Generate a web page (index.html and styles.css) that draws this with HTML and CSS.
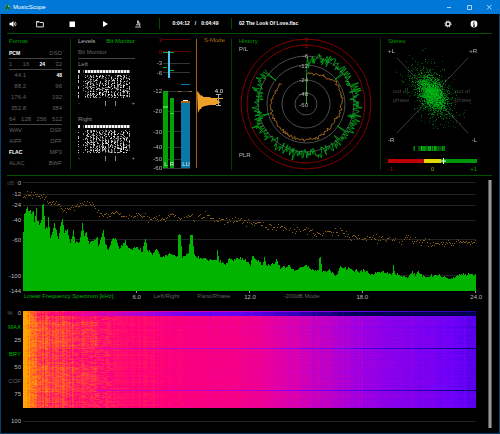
FILE: index.html
```
<!DOCTYPE html>
<html lang="en">
<head>
  <meta charset="UTF-8">
  <meta name="viewport" content="width=device-width, initial-scale=1.0">
  <title>MusicScope</title>
  <link rel="stylesheet" href="styles.css">
</head>
<body>

<header class="titlebar">
  <svg class="logo" viewBox="0 0 8 8"><circle cx="4" cy="4" r="3.6" fill="#1f8f86"/><path d="M2.5 6.5l1-3 .8-2 .6 2.2 1 2.8M1.5 4.5h2" fill="none" stroke="#0b2d3c" stroke-width=".9"/><circle cx="5.4" cy="2.6" r=".8" fill="#a5d06a"/></svg>
  <h1>MusicScope</h1>
  <button class="win" aria-label="Minimize"><svg viewBox="0 0 6 6"><path d="M1 3.5h4"/></svg></button>
  <button class="win" aria-label="Maximize"><svg viewBox="0 0 6 6"><path d="M1.500 1.500h4v4h-4z"/></svg></button>
  <button class="win" aria-label="Close"><svg viewBox="0 0 6 6"><path d="M1 1l4.500 4.500M5.500 1l-4.500 4.500"/></svg></button>
</header>

<div class="window">
  <nav class="toolbar">
    <button class="tool volume" aria-label="Volume"><svg viewBox="0 0 8 8"><path d="M.5 2.800h1.700l2.300-1.900v6.200l-2.300-1.900h-1.700z" fill="#fff"/><path d="M5.300 2.600q.9 1.400 0 2.800M6.300 1.800q1.700 2.200 0 4.400" fill="none" stroke="#ddd" stroke-width=".8"/></svg></button>
    <button class="tool folder" aria-label="Open"><svg viewBox="0 0 8 8"><path d="M.6 6.900v-5.400h2.400l.8 1h3.600v4.400z" fill="none" stroke="#ddd"/><path d="M.6 1.300h2.600v1.200h-2.600z" fill="#ddd"/></svg></button>
    <button class="tool" aria-label="Stop"><svg viewBox="0 0 8 8"><path d="M1.500 1.500h5.500v5.500h-5.500z" fill="#fff"/></svg></button>
    <button class="tool" aria-label="Play"><svg viewBox="0 0 8 8"><path d="M2 1l5 3-5 3z" fill="#fff"/></svg></button>
    <button class="tool" aria-label="Analyze"><svg viewBox="0 0 8 8"><path d="M3.200.6h1.600v3.200h-1.600z" fill="#ddd"/><path d="M5 2.200q1.800 1.500.5 3.800M2 4.800h3.500M1.200 7h5.800" fill="none" stroke="#ddd" stroke-width=".9"/></svg></button>
    <div class="time"><span>0:04:12</span><span>/</span><span>0:04:49</span></div>
    <div class="track">02 The Look Of Love.flac</div>
    <button class="tool side" aria-label="Settings"><svg viewBox="0 0 8 8"><circle cx="4" cy="4" r="2.900" fill="none" stroke="#ddd" stroke-width="1.200" stroke-dasharray="1.300 .98"/><circle cx="4" cy="4" r="1.900" fill="none" stroke="#ddd" stroke-width="1.200"/></svg></button>
    <button class="tool side" aria-label="Info"><svg viewBox="0 0 8 8"><circle cx="4" cy="4" r="3.400" fill="#fff"/><path d="M4 1.500v1.200M4 3.400v3M3.200 3.700h.8M3 6.200h2" stroke="#000" stroke-width=".9"/></svg></button>
  </nav>

  <main>
    <div class="panels">
      <section class="panel format">
        <h2>Format</h2>
        <div class="row line"><b>PCM</b><span>DSD</span></div>
        <div class="row line"><span>1</span><span>16</span><b>24</b><span>32</span></div>
        <div class="row rate"><span>44.1</span><b>48</b></div>
        <div class="row rate"><span>88.2</span><span>96</span></div>
        <div class="row rate"><span>176.4</span><span>192</span></div>
        <div class="row rate"><span>352.8</span><span>384</span></div>
        <div class="row line"><span>64</span><span>128</span><span>256</span><span>512</span></div>
        <div class="row"><span>WAV</span><span>DSF</span></div>
        <div class="row"><span>AIFF</span><span>DFF</span></div>
        <div class="row"><b>FLAC</b><span>MP3</span></div>
        <div class="row"><span>ALAC</span><span>BWF</span></div>
      </section>

      <section class="panel levels divided">
        <div class="tabs"><button>Levels</button><button class="active">Bit Monitor</button></div>
        <h3>Bit Monitor</h3>
        <div class="channel">
          <p>Left</p>
          <canvas class="bits" width="57" height="28"></canvas>
          <div class="scale"><span>-</span><i></i><i></i><span>+</span></div>
        </div>
        <div class="channel">
          <p>Right</p>
          <canvas class="bits" width="57" height="28"></canvas>
          <div class="scale"><span>-</span><i></i><i></i><span>+</span></div>
        </div>
      </section>

      <section class="panel">
        <svg class="chart" viewBox="148 38 83 132">
          <g class="crisp">
            <path d="M163 39.500h27M163 51.500h27" stroke="#5c0000"/>
            <path d="M163 63.500h27M163 72.500h27M163 91.500h27M163 111.500h27M163 131.500h27M163 147.500h27M163 159.500h27M163 168.500h27" stroke="#333"/>
            <path d="M163 91h5v77h-5zM170 98h4v70h-4z" fill="#00a400"/>
            <path d="M163 106h5v2h-5zM170 113h4v1h-4z" fill="#30e030"/>
            <path d="M163 52h11v1h-11zM163 67h4v1h-4zM170 70h4v1h-4z" fill="#00b030"/>
            <path d="M168 51h2v27h-2z" fill="#4cc8f0"/>
            <path d="M181 84h9v1h-9zM181 102h9v66h-9z" fill="#0878a8"/>
            <path d="M181 101h9v2h-9zM178 91h3v1h-3zM189 91h3v1h-3z" fill="#a86818"/>
            <path d="M183 100h5v1h-5z" fill="#fff"/>
            <path d="M196 39h1v129h-1z" fill="#a06410"/>
          </g>
          <path d="M197 91l2 2 1 2 3 1 0 1 7 0 1 1 12 0 0 1-6 0 0 1 3 1-1 1 2 1-2 0-1 1-2 0 0 1-6 0-5 1-3 1-1 2-1 0-2 4z" fill="#f0a028"/>
          <path d="M218.500 94.500v11M216 94.500h5M216 105.500h5" stroke="#aaa" fill="none"/>
          <g class="end red"><text x="162" y="42">3</text><text x="162" y="54">0</text></g>
          <g class="end"><text x="162" y="65">-3</text><text x="162" y="75">-6</text><text x="162" y="93">-12</text><text x="162" y="113">-20</text><text x="162" y="134">-30</text><text x="162" y="149">-40</text><text x="162" y="161">-50</text><text x="162" y="170">-60</text></g>
          <g class="mid white"><text x="166" y="166">L</text><text x="172" y="166">R</text><text x="186" y="166">LU</text><text x="219" y="93">4.0</text></g>
          <text x="204" y="42" class="amber">S-Mode</text>
        </svg>
      </section>

      <section class="panel divided">
        <svg class="chart" viewBox="232 38 148 132">
          <g fill="none" stroke="#4c4c4c">
            <circle cx="306" cy="104" r="48"/><circle cx="306" cy="104" r="39"/><circle cx="306" cy="104" r="24"/><circle cx="306" cy="104" r="11"/>
          </g>
          <g fill="none" stroke="#840000"><circle cx="306" cy="104" r="65"/><circle cx="306" cy="104" r="59"/></g>
          <polyline id="plr" class="trace amber-line"/>
          <polyline id="pl" class="trace green-line"/>
          <g class="end red"><text x="308" y="42">3</text><text x="308" y="48">0</text></g>
          <g class="end"><text x="308" y="58">-6</text><text x="308" y="68">-12</text><text x="308" y="82">-24</text><text x="308" y="96">-48</text><text x="308" y="107">-60</text></g>
          <text x="239" y="43" class="green">History</text>
          <text x="239" y="51">P/L</text>
          <text x="239" y="157">PLR</text>
        </svg>
      </section>

      <section class="panel divided">
        <svg class="chart" viewBox="381 38 111 132">
          <path d="M397 58l71 75M468 58l-71 75" stroke="#3c3c3c" fill="none"/>
          <g class="dim"><text x="393" y="93">out of</text><text x="393" y="102">phase</text><text x="455" y="93">out of</text><text x="455" y="102">phase</text></g>
          <g id="goniometer"></g>
          <g id="stripes" class="crisp"></g>
          <g class="crisp">
            <path d="M388 159h36v4h-36z" fill="#c00000"/><path d="M424 159h17v4h-17z" fill="#e0d800"/><path d="M441 159h36v4h-36z" fill="#00980a"/><path d="M441 160h5v2h-5z" fill="#70d070"/><path d="M443 158h1v6h-1z" fill="#fff"/>
          </g>
          <text x="388" y="43" class="green">Stereo</text>
          <text x="388" y="53">+L</text><text x="388" y="142">-R</text>
          <g class="end"><text x="477" y="53">+R</text><text x="477" y="142">-L</text></g>
          <text x="388" y="171" class="red">-1</text><text x="431" y="171" class="yellow">0</text><text x="477" y="171" class="end green">+1</text>
        </svg>
      </section>
    </div>

    <div class="analysis">
      <div class="plots">
        <svg class="chart" viewBox="7 179 481 114">
          <path class="crisp" d="M23 182.500h453M23 194.500h453M23 205.500h453M23 220.500h453M23 239.500h453M23 275.500h453" stroke="#222"/>
          <path id="peaks" class="crisp" fill="#8a5e10"/>
          <path id="spectrum" class="crisp" fill="#00b400"/>
          <path class="crisp" d="M136.500 291v2M249.500 291v2M362.500 291v2M475.500 291v2" stroke="#999"/>
          <text x="7" y="185" class="dim">dB</text>
          <g class="end"><text x="21" y="185">0</text><text x="21" y="196">-12</text><text x="21" y="207">-24</text><text x="21" y="222">-40</text><text x="21" y="242">-60</text><text x="21" y="278">-100</text><text x="21" y="293">-144</text></g>
        </svg>
        <div class="freq">
          <strong>Linear Frequency Spectrum [kHz]</strong>
          <span>6.0</span>
          <button class="channels">Left/Right</button>
          <button>Pano/Phase</button>
          <span>12.0</span>
          <button class="mode">-200dB Mode</button>
          <span>18.0</span>
          <span class="last">24.0</span>
        </div>
        <div class="history">
          <div class="rail">
            <span class="zero"><em>%</em>0</span>
            <button class="active">MAX</button>
            <span>25</span>
            <button class="active">BRY</button>
            <span>50</span>
            <button>COF</button>
            <span>75</span>
            <i></i>
            <span>100</span>
          </div>
          <div class="gram"><canvas id="spectrogram" width="452" height="97"></canvas></div>
        </div>
      </div>
      <div class="scrollbar"></div>
    </div>
  </main>
</div>

<script src="script.js"></script>
</body>
</html>
```
FILE: styles.css
```
* {
  box-sizing: border-box;
}
body {
  margin: 0;
  min-height: 100vh;
  display: flex;
  flex-direction: column;
  background: #000;
  color: #bbb;
  font: 6px/7px "Liberation Sans", Arial, sans-serif;
}
h1, h2, h3, p {
  margin: 0;
  font-size: 6px;
  font-weight: normal;
}
button {
  padding: 0;
  border: 0;
  background: none;
  color: inherit;
  font: inherit;
  cursor: pointer;
}
svg, canvas {
  display: block;
}
.titlebar {
  display: flex;
  align-items: center;
  height: 14px;
  padding: 0 1px 0 4px;
  background: #0078d7;
  color: #fff;
}
.titlebar h1 {
  flex: 1;
  padding-left: 2px;
}
.logo {
  width: 7px;
  height: 7px;
}
.win {
  display: flex;
  justify-content: center;
  width: 20px;
}
.win svg {
  width: 6px;
  height: 6px;
  fill: none;
  stroke: #d0e8ff;
  stroke-width: .8;
}
.window {
  flex: 1;
  border: 1px solid #063f6b;
  border-top: 0;
}
.toolbar {
  display: flex;
  align-items: center;
  height: 19px;
  color: #fff;
}
.tool {
  display: flex;
  justify-content: center;
  width: 33px;
}
.tool svg {
  width: 8px;
  height: 8px;
}
.tool.volume {
  width: 24px;
}
.tool.folder {
  width: 30px;
}
.tool.side {
  width: 26px;
}
.tool.side:last-child {
  margin-right: 12px;
}
.time {
  display: flex;
  justify-content: center;
  gap: 5px;
  width: 73px;
  margin-left: 5px;
  padding: 2px 0;
  border: solid #004c00;
  border-width: 0 1px;
}
.time, .track {
  font-size: 5px;
  font-weight: bold;
}
.track {
  flex: 1;
  padding-left: 7px;
}
main {
  margin: 0 7px 0 6px;
  border-top: 1px solid #005000;
}
.panels {
  display: grid;
  grid-template-columns: 63fr 78fr 83fr 149fr 112fr;
  padding: 4px 0 5px;
  border-bottom: 1px solid #005000;
}
.divided {
  border-left: 1px solid #003c00;
}
.chart {
  width: 100%;
  overflow: visible;
}
.chart text {
  fill: #bbb;
}
.crisp {
  shape-rendering: crispEdges;
}
.chart .end, .chart text.end {
  text-anchor: end;
}
.mid {
  text-anchor: middle;
}
.chart .white text {
  fill: #e8e8e8;
}
.chart .red, .chart .red text {
  fill: #b00000;
}
.chart .green {
  fill: #00a000;
}
.chart .amber {
  fill: #b07014;
}
.chart .yellow {
  fill: #a8a000;
}
.chart .dim, .chart .dim text {
  fill: #444;
}
.trace {
  fill: none;
  stroke-width: .8;
}
.green-line {
  stroke: #00b41c;
}
.amber-line {
  stroke: #c88024;
}
.format {
  padding: 0 8px 0 2px;
  color: #606060;
}
.format h2 {
  height: 10px;
  color: #00a000;
}
.format b {
  color: #fff;
  font-size: 5px;
}
.row {
  display: flex;
  justify-content: space-between;
  height: 11px;
  line-height: 11px;
}
.row.line {
  border-bottom: 1px solid #444;
}
.rate span:first-child {
  width: 17px;
  text-align: right;
}
.levels {
  padding: 0 13px 0 7px;
}
.tabs {
  display: flex;
  justify-content: space-between;
  height: 11px;
  align-items: flex-start;
}
.tabs .active, .rail .active {
  color: #00b400;
}
.levels h3 {
  height: 10px;
  border-bottom: 1px solid #444;
  color: #666;
}
.channel {
  height: 55px;
  padding-top: 2px;
  color: #888;
}
.channel p {
  height: 9px;
}
.bits {
  width: 100%;
  height: 28px;
}
.scale {
  display: grid;
  grid-template-columns: 28fr 10fr 17fr 2fr;
  height: 5px;
  margin-top: 3px;
  line-height: 5px;
}
.scale i {
  border-left: 1px solid #888;
}
.analysis {
  display: grid;
  grid-template-columns: 1fr 4px;
  padding-top: 3px;
}
.scrollbar {
  margin-top: 1px;
  border: solid #555;
  border-width: 0 1px;
  background: #999;
}
.freq {
  display: grid;
  grid-template-columns: 106fr 14fr 54fr 45fr 15fr 98fr 14fr 107fr;
  height: 14px;
  margin: 0 12px 0 17px;
  color: #606060;
}
.freq strong {
  color: #00b400;
  font-weight: normal;
  white-space: nowrap;
}
.freq span {
  padding-top: 1px;
  color: #bbb;
  text-align: center;
}
.freq button {
  justify-self: start;
  align-self: start;
}
.freq .channels {
  margin-left: 10px;
}
.freq .mode {
  margin-left: 26px;
}
.freq .last {
  text-align: right;
  margin-right: -6px;
}
.history {
  display: grid;
  grid-template-columns: 16px 1fr;
}
.rail {
  display: grid;
  grid-template-rows: repeat(4, 13px 14px) 13px;
  align-items: center;
  justify-items: end;
  padding-right: 2px;
  color: #606060;
}
.rail span {
  color: #bbb;
}
.rail .zero {
  display: flex;
  gap: 5px;
}
.rail em {
  color: #606060;
  font-style: normal;
}
.gram {
  margin: 4px 12px 6px 0;
  border-bottom: 1px solid #222;
}
#spectrogram {
  width: 100%;
  height: 97px;
}
```
FILE: script.js
```
let seed = 7;
function rnd() {
  seed = (seed * 16807) % 2147483647;
  return seed / 2147483647;
}
function gauss() {
  return rnd() + rnd() + rnd() + rnd() - 2;
}
// linear interpolation over [x, y, x, y, ...]
function at(points, x) {
  for (let i = 2; i < points.length; i += 2) {
    if (x <= points[i]) {
      const t = (x - points[i - 2]) / (points[i] - points[i - 2]);
      return points[i - 1] + t * (points[i + 1] - points[i - 1]);
    }
  }
  return points[points.length - 1];
}

// bit monitor
document.querySelectorAll('.bits').forEach(canvas => {
  const ctx = canvas.getContext('2d');
  const dot = (x, y, w, h, v) => {
    ctx.fillStyle = `rgb(${v},${v},${v})`;
    ctx.fillRect(x, y, w, h);
  };
  for (let x = 7; x < 52; x += 3) {
    dot(x, 0, 3, 3, 120);
    dot(x, 0, 2, 3, 245);
  }
  dot(0, 0, 2, 3, 220);
  dot(5, 0, 1, 3, 90);
  for (let y = 5; y < 28; y++) {
    if (rnd() < .5) dot(0, y, 1, 1, 190);
    if (rnd() < .15) dot(5, y, 1, 1, 140);
    for (let x = 7; x < 52; x++) {
      if (rnd() < (x % 3 === 0 ? .7 : x % 3 === 1 ? .4 : .12)) dot(x, y, 1, 1, Math.round(70 + rnd() * 170));
    }
  }
});

// history rings
function ring(id, start, radius, spread, spike) {
  const pts = [start];
  for (let a = 1; a < 311; a += spike ? 1 : 2) {
    let r = radius(a) + gauss() * spread;
    if (spike && (a === 50 || a === 125 || a === 255 || a === 308)) r = 38;
    const t = (a - 90) * Math.PI / 180;
    pts.push((306 + r * Math.cos(t)).toFixed(1) + ',' + (104 + r * Math.sin(t)).toFixed(1));
  }
  document.getElementById(id).setAttribute('points', pts.join(' '));
}
ring('pl', '306.500,104', a => a < 15 ? 41 + a / 3 : 50, 5.5, true);
ring('plr', '306.500,104', a => at([0, 30, 40, 33, 50, 37, 90, 36, 120, 33, 180, 36, 270, 35, 310, 32], a), 1.4, false);

// stereo cloud
const NS = 'http://www.w3.org/2000/svg';
function add(parent, x, y, w, h, fill) {
  const r = document.createElementNS(NS, 'rect');
  for (const [k, v] of Object.entries({ x, y, width: w, height: h, fill })) r.setAttribute(k, v);
  parent.appendChild(r);
}
const cloud = document.getElementById('goniometer');
for (let i = 0; i < 2600; i++) {
  const k = i % 3 ? 1 : 1.9;
  const u = gauss() * 15 * k, v = gauss() * 9 * k;
  add(cloud, Math.round(432 + u * .6 + v * .75), Math.round(93 + u * .8 - v * .66), 1, 1,
    `rgba(0,${Math.round(110 + rnd() * 120)},20,${k > 1 ? .45 : .55})`);
}
const stripes = document.getElementById('stripes');
for (let x = 413; x < 445; x++) {
  if (x === 415 || x === 416 || x === 417) continue;
  add(stripes, x, 146, 1, 5, `rgb(0,${Math.round(50 + rnd() * 150)},10)`);
}

// frequency spectrum
const level = [23,232,24,214,25,212,27,208,28,212,30,211,31,215,33,212,34,222,36,210,37,220,39,224,41,221,42,204,43,204,45,228,47,226,48,218,50,238,52,232,54,224,56,230,58,240,60,226,61,222,62,218,64,232,67,230,70,243,73,231,75,242,79,242,81,232,82,223,84,236,86,232,88,242,92,242,97,237,98,245,101,238,103,231,105,244,108,249,113,237,117,242,119,249,125,241,127,246,130,249,137,247,142,251,145,238,147,249,152,254,156,248,160,257,165,255,172,254,177,256,178,234,180,234,182,257,186,255,188,254,190,235,192,235,194,254,197,257,207,260,216,260,217,250,219,262,227,264,229,257,233,261,235,258,243,259,250,265,252,256,256,261,262,265,264,257,266,265,274,264,276,260,280,268,289,266,294,270,305,266,312,269,318,271,319,257,320,257,322,272,330,270,336,276,339,267,350,269,360,272,364,270,370,274,380,272,392,274,393,266,395,274,407,278,412,271,415,276,417,271,423,277,438,275,450,279,460,274,475,275];
let d = 'M23 291';
for (let x = 23; x < 476; x++) {
  const y = Math.round(at(level, x) + gauss() * 1.4);
  d += `V${y}H${x + 1}`;
}
document.getElementById('spectrum').setAttribute('d', d + 'V291z');

const peak = [23,199,28,194,35,194,42,196,50,201,58,205,65,210,72,207,80,204,92,203,97,212,105,214,115,211,125,217,140,215,150,218,165,219,172,213,180,219,188,217,195,220,205,213,215,220,230,221,243,220,250,223,257,222,265,228,275,226,283,229,292,232,305,228,315,233,330,232,342,233,350,236,365,237,380,238,390,239,400,242,405,238,420,241,435,244,450,243,460,241,470,244,475,237];
d = '';
for (let x = 23; x < 476; x++) {
  if (rnd() < .1) continue;
  d += `M${x} ${Math.round(at(peak, x) + gauss() * 3)}h1v1h-1z`;
}
document.getElementById('peaks').setAttribute('d', d);

// spectrogram
const palette = [
  [0, 0, 0, 80], [.12, 50, 0, 190], [.25, 105, 0, 250], [.4, 160, 0, 225],
  [.55, 225, 0, 170], [.7, 255, 0, 120], [.85, 255, 80, 50], [1, 255, 165, 0]
];
const channels = [1, 2, 3].map(c => palette.flatMap(p => [p[0], p[c]]));
const curve = [0, 1, 8, .95, 14, .84, 40, .78, 75, .73, 130, .7, 220, .64, 260, .55, 300, .47, 350, .37, 400, .3, 452, .22];
const gram = document.getElementById('spectrogram');
const g = gram.getContext('2d');
const img = g.createImageData(452, 97);
const cols = Array.from({ length: 452 }, (_, x) => gauss() * (x < 60 ? .07 : .025));
for (let y = 0; y < 97; y++) {
  const shift = gauss() * .018;
  const loud = (y > 10 && y < 38) || (y > 54 && y < 81);
  let n = 0;
  for (let x = 0; x < 452; x++) {
    n = n * .5 + gauss() * (x < 90 ? .05 : .014);
    let v = at(curve, x) + shift + cols[x] + n;
    if (loud && x > 10 && x < 74) v += .04;
    if (y < 5 && x > 8) v -= Math.min(.4, x / 420) * (y === 0 ? .4 : 1);
    if ((y === 37 || y === 79) && x > 70) v -= .2;
    v = Math.max(0, Math.min(1, v));
    const i = (y * 452 + x) * 4;
    for (let c = 0; c < 3; c++) img.data[i + c] = at(channels[c], v);
    img.data[i + 3] = 255;
  }
}
g.putImageData(img, 0, 0);
```
